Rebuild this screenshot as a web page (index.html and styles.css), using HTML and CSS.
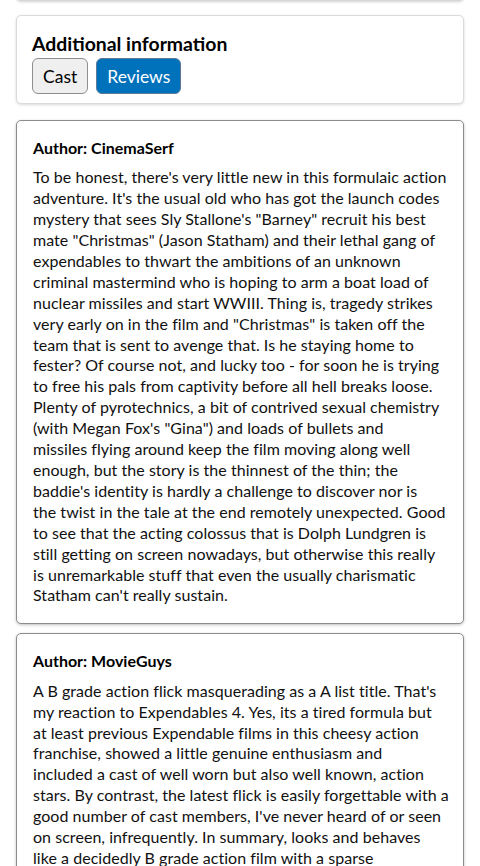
FILE: index.html
```html
<!DOCTYPE html>
<html lang="en">
<head>
<meta charset="utf-8">
<title>Additional information</title>
<link rel="stylesheet" href="styles.css">
</head>
<body>
<div class="page">
  <div class="card card-prev"></div>
  <section class="card info">
    <h2 class="info-title">Additional information</h2>
    <div class="tabs">
      <button class="tab" type="button">Cast</button>
      <button class="tab tab-active" type="button">Reviews</button>
    </div>
  </section>
  <div class="reviews">
    <article class="card review">
      <h3 class="review-author">Author: CinemaSerf</h3>
      <p class="review-text">To be honest, there's very little new in this formulaic action<br>
adventure. It's the usual old who has got the launch codes<br>
mystery that sees Sly Stallone's "Barney" recruit his best<br>
mate "Christmas" (Jason Statham) and their lethal gang of<br>
expendables to thwart the ambitions of an unknown<br>
criminal mastermind who is hoping to arm a boat load of<br>
nuclear missiles and start WWIII. Thing is, tragedy strikes<br>
very early on in the film and "Christmas" is taken off the<br>
team that is sent to avenge that. Is he staying home to<br>
fester? Of course not, and lucky too - for soon he is trying<br>
to free his pals from captivity before all hell breaks loose.<br>
Plenty of pyrotechnics, a bit of contrived sexual chemistry<br>
(with Megan Fox's "Gina") and loads of bullets and<br>
missiles flying around keep the film moving along well<br>
enough, but the story is the thinnest of the thin; the<br>
baddie's identity is hardly a challenge to discover nor is<br>
the twist in the tale at the end remotely unexpected. Good<br>
to see that the acting colossus that is Dolph Lundgren is<br>
still getting on screen nowadays, but otherwise this really<br>
is unremarkable stuff that even the usually charismatic<br>
Statham can't really sustain.</p>
    </article>
    <article class="card review">
      <h3 class="review-author">Author: MovieGuys</h3>
      <p class="review-text">A B grade action flick masquerading as a A list title. That's<br>
my reaction to Expendables 4. Yes, its a tired formula but<br>
at least previous Expendable films in this cheesy action<br>
franchise, showed a little genuine enthusiasm and<br>
included a cast of well worn but also well known, action<br>
stars. By contrast, the latest flick is easily forgettable with a<br>
good number of cast members, I've never heard of or seen<br>
on screen, infrequently. In summary, looks and behaves<br>
like a decidedly B grade action film with a sparse<br>
plot and little else to recommend it.</p>
    </article>
  </div>
</div>
</body>
</html>
```

FILE: styles.css
```css
html, body {
  margin: 0;
  padding: 0;
  background: #ffffff;
}

body {
  font-family: Lato, "Liberation Sans", sans-serif;
  color: #111111;
}

.page {
  padding: 0 16px 16px;
}

.card {
  background: #ffffff;
  border-radius: 5px;
}

.card-prev {
  height: 12px;
  margin-top: -13px;
  border: 1px solid #d6d6d6;
  box-shadow: 0 1px 3px rgba(0, 0, 0, 0.18);
}

.info {
  margin-top: 14px;
  padding: 16px 15px 9px;
  border: 1px solid #dadada;
  box-shadow: 0 1px 3px rgba(0, 0, 0, 0.15);
}

.info-title {
  margin: 0;
  font-size: 19.4px;
  line-height: 24px;
  font-weight: 700;
  color: #000000;
}

.tabs {
  display: flex;
  gap: 8px;
  margin-top: 2px;
}

.tab {
  height: 36px;
  padding: 0 10px;
  font-family: inherit;
  font-size: 17.5px;
  border-radius: 6px;
  border: 1px solid #8f8f8f;
  background: #efefef;
  color: #000000;
}

.tab-active {
  background: #0071bb;
  border-color: #5d7b97;
  color: #ffffff;
}

.reviews {
  display: flex;
  flex-direction: column;
  gap: 9px;
  margin-top: 16px;
}

.review {
  padding: 16px 16px 17px;
  border: 1px solid #8c8c8c;
  box-shadow: 0 1px 3px rgba(0, 0, 0, 0.25);
}

.review-author {
  margin: 0 0 9px;
  font-size: 16px;
  line-height: 21.33px;
  font-weight: 700;
  color: #000000;
}

.review-text {
  margin: 0;
  font-size: 16px;
  line-height: 20.9px;
  letter-spacing: 0.04px;
  white-space: nowrap;
}
```
